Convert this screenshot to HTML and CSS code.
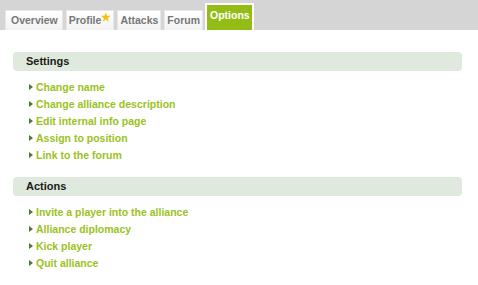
FILE: index.html
```html
<!DOCTYPE html>
<html>
<head>
<meta charset="utf-8">
<link rel="stylesheet" href="styles.css">
</head>
<body>
<div class="tabbar">
  <div class="tab tab-first">Overview</div>
  <div class="tab">Profile<span class="star">★</span></div>
  <div class="tab">Attacks</div>
  <div class="tab">Forum</div>
  <div class="tab active">Options</div>
</div>
<div class="content">
  <div class="section">
    <div class="head">Settings</div>
    <ul class="links">
      <li><span class="arrow"></span><a>Change name</a></li>
      <li><span class="arrow"></span><a>Change alliance description</a></li>
      <li><span class="arrow"></span><a>Edit internal info page</a></li>
      <li><span class="arrow"></span><a>Assign to position</a></li>
      <li><span class="arrow"></span><a>Link to the forum</a></li>
    </ul>
  </div>
  <div class="section">
    <div class="head">Actions</div>
    <ul class="links">
      <li><span class="arrow"></span><a>Invite a player into the alliance</a></li>
      <li><span class="arrow"></span><a>Alliance diplomacy</a></li>
      <li><span class="arrow"></span><a>Kick player</a></li>
      <li><span class="arrow"></span><a>Quit alliance</a></li>
    </ul>
  </div>
</div>
</body>
</html>
```
FILE: styles.css
```css
* { box-sizing: border-box; }
body {
  margin: 0;
  background: #fff;
  font-family: "Liberation Sans", Arial, sans-serif;
  font-size: 10.5px;
  font-weight: bold;
}
.tabbar {
  height: 30px;
  background: #d5d5d5;
  display: flex;
  align-items: flex-end;
  padding-left: 5px;
  gap: 3px;
}
.tab {
  height: 20px;
  padding: 0 2px;
  background: linear-gradient(#ffffff, #f2f2f2);
  border: 1px solid #e8e8e8;
  border-bottom: none;
  color: #777;
  line-height: 21px;
  display: flex;
  align-items: center;
}
.tab-first { padding: 0 4px 0 5px; }
.star {
  color: #f4c20d;
  font-size: 11px;
  align-self: flex-start;
  line-height: 12px;
}
.tab.active {
  height: 27px;
  margin-left: -1px;
  background: #93bd15;
  border: 2px solid #fff;
  border-bottom: none;
  color: #fff;
  align-items: flex-start;
  padding: 4px 2px 0 3px;
  line-height: 13px;
}
.content {
  padding: 22px 16px 0 13px;
}
.section { margin-bottom: 14px; }
.head {
  height: 19px;
  background: #dfe9de;
  border-radius: 4px;
  color: #1a1a1a;
  padding-left: 13px;
  line-height: 19px;
  font-size: 11px;
}
.links {
  list-style: none;
  margin: 0;
  padding: 7px 0 0 16px;
}
.links li {
  height: 17px;
  display: flex;
  align-items: center;
}
.arrow {
  width: 0;
  height: 0;
  border-top: 3px solid transparent;
  border-bottom: 3px solid transparent;
  border-left: 4px solid #4e7a2a;
  margin-right: 3px;
}
.links a {
  color: #99c31c;
}
```
